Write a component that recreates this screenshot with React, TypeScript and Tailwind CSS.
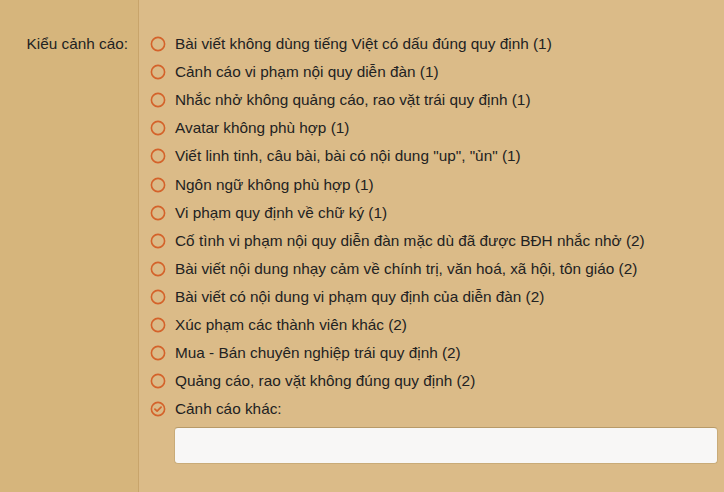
import React from 'react';

const options = [
  'Bài viết không dùng tiếng Việt có dấu đúng quy định (1)',
  'Cảnh cáo vi phạm nội quy diễn đàn (1)',
  'Nhắc nhở không quảng cáo, rao vặt trái quy định (1)',
  'Avatar không phù hợp (1)',
  'Viết linh tinh, câu bài, bài có nội dung "up", "ủn" (1)',
  'Ngôn ngữ không phù hợp (1)',
  'Vi phạm quy định về chữ ký (1)',
  'Cố tình vi phạm nội quy diễn đàn mặc dù đã được BĐH nhắc nhở (2)',
  'Bài viết nội dung nhạy cảm về chính trị, văn hoá, xã hội, tôn giáo (2)',
  'Bài viết có nội dung vi phạm quy định của diễn đàn (2)',
  'Xúc phạm các thành viên khác (2)',
  'Mua - Bán chuyên nghiệp trái quy định (2)',
  'Quảng cáo, rao vặt không đúng quy định (2)',
];

const Radio = ({ checked }: { checked?: boolean }) => (
  <svg width="16" height="16" viewBox="0 0 16 16" className="shrink-0">
    <circle cx="8" cy="8" r="6.6" fill="none" stroke="#d4622a" strokeWidth="1.6" />
    {checked && (
      <path d="M4.9 8.1 L7.1 10.2 L11.1 6.1" fill="none" stroke="#d4622a" strokeWidth="1.7" strokeLinecap="round" strokeLinejoin="round" />
    )}
  </svg>
);

export default function App() {
  return (
    <div className="flex w-[724px] h-[492px] overflow-hidden text-[15.35px] text-[#222] font-['Liberation_Sans',Arial,sans-serif]">
      {/* label column */}
      <div className="w-[139px] shrink-0 bg-[#d6b57c] border-r border-[#c8a46b] pt-[30px] pr-[10px] text-right">
        <div className="h-7 leading-7">Kiểu cảnh cáo:</div>
      </div>

      {/* options */}
      <div className="flex-1 bg-[#dbbb88] pt-[30px] pl-[11px] pr-[6px]">
        {options.map((o) => (
          <label key={o} className="flex items-center h-[28.1px] gap-[9px]">
            <Radio />
            <span className="leading-7 whitespace-nowrap">{o}</span>
          </label>
        ))}
        <label className="flex items-center h-[28.1px] gap-[9px]">
          <Radio checked />
          <span className="leading-7">Cảnh cáo khác:</span>
        </label>
        <div className="pl-[24px] pt-[4px]">
          <input
            type="text"
            className="block w-full h-[37px] rounded-[4px] bg-[#f8f7f6] border border-[#c9ab78] border-t-[#b89a68] outline-none"
          />
        </div>
      </div>
    </div>
  );
}
